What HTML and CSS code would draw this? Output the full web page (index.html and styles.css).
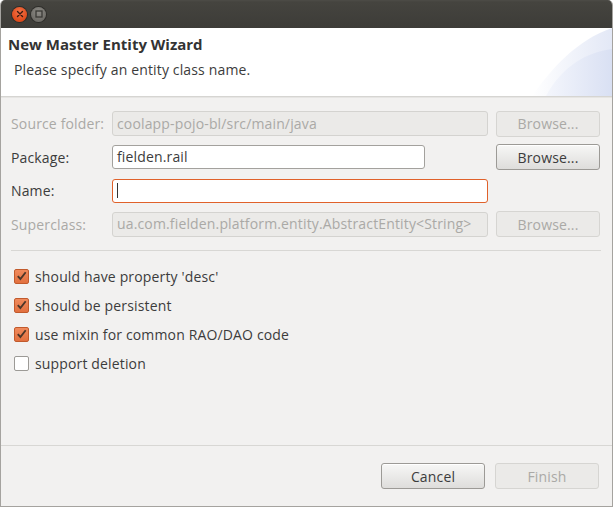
FILE: index.html
```html
<!DOCTYPE html>
<html>
<head>
<meta charset="utf-8">
<link rel="stylesheet" href="styles.css">
</head>
<body>
<div class="window">
  <div class="titlebar">
    <span class="wbtn close"><svg width="14" height="14" viewBox="0 0 14 14"><path d="M4.5 4.5l5 5M9.5 4.5l-5 5" stroke="#3a1a10" stroke-width="1.4" stroke-linecap="round"/></svg></span>
    <span class="wbtn max"><svg width="14" height="14" viewBox="0 0 14 14"><rect x="4" y="4" width="6" height="6" fill="none" stroke="#3b3a36" stroke-width="1.3"/></svg></span>
  </div>
  <div class="header">
    <div class="header-text">
      <div class="h-title">New Master Entity Wizard</div>
      <div class="h-sub">Please specify an entity class name.</div>
    </div>
    <svg class="decor" width="80" height="68" viewBox="0 0 80 68">
      <defs>
        <linearGradient id="g1" x1="0" y1="0" x2="1" y2="0">
          <stop offset="0" stop-color="#ffffff"/>
          <stop offset="1" stop-color="#e3e8f6"/>
        </linearGradient>
        <linearGradient id="g2" x1="0" y1="0" x2="1" y2="0">
          <stop offset="0" stop-color="#f4f6fc"/>
          <stop offset="1" stop-color="#d9e0f3"/>
        </linearGradient>
      </defs>
      <path d="M0 68 C20 40 45 12 80 0 L80 68 Z" fill="url(#g1)"/>
      <path d="M14 68 C30 38 55 24 80 21 L80 68 Z" fill="url(#g2)"/>
    </svg>
  </div>
  <div class="content">
    <div class="form">
      <label class="lbl disabled">Source folder:</label>
      <div class="field disabled">coolapp-pojo-bl/src/main/java</div>
      <button class="btn disabled">Browse...</button>

      <label class="lbl">Package:</label>
      <div class="cell"><div class="field short">fielden.rail</div></div>
      <button class="btn">Browse...</button>

      <label class="lbl">Name:</label>
      <div class="field focus"><span class="caret"></span></div>
      <div></div>

      <label class="lbl disabled">Superclass:</label>
      <div class="field disabled">ua.com.fielden.platform.entity.AbstractEntity&lt;String&gt;</div>
      <button class="btn disabled">Browse...</button>
    </div>
    <div class="sep"></div>
    <div class="checks">
      <div class="check"><span class="box on"><svg width="14" height="14" viewBox="0 0 14 14"><path d="M3 7.2l2.8 3L11.5 3" fill="none" stroke="#4b3629" stroke-width="2"/></svg></span>should have property 'desc'</div>
      <div class="check"><span class="box on"><svg width="14" height="14" viewBox="0 0 14 14"><path d="M3 7.2l2.8 3L11.5 3" fill="none" stroke="#4b3629" stroke-width="2"/></svg></span>should be persistent</div>
      <div class="check"><span class="box on"><svg width="14" height="14" viewBox="0 0 14 14"><path d="M3 7.2l2.8 3L11.5 3" fill="none" stroke="#4b3629" stroke-width="2"/></svg></span>use mixin for common RAO/DAO code</div>
      <div class="check"><span class="box"></span>support deletion</div>
    </div>
  </div>
  <div class="footer">
    <button class="btn wide">Cancel</button>
    <button class="btn wide disabled">Finish</button>
  </div>
</div>
</body>
</html>
```
FILE: styles.css
```css
html, body {
  margin: 0;
  padding: 0;
  background: #ffffff;
}
body {
  font-family: "Open Sans", "DejaVu Sans", sans-serif;
  font-size: 14px;
  letter-spacing: 0.15px;
  color: #3c3c3c;
}
.window {
  width: 613px;
  height: 507px;
  box-sizing: border-box;
  display: flex;
  flex-direction: column;
  background: #f2f1f0;
  border-left: 1px solid #a5a39f;
  border-right: 1px solid #a5a39f;
  border-bottom: 1px solid #a5a39f;
  border-radius: 5px 5px 0 0;
  overflow: hidden;
}
.titlebar {
  height: 28px;
  flex: none;
  background: linear-gradient(#4d4c47 0, #45443f 2px, #3d3c38 100%);
  display: flex;
  align-items: center;
  gap: 4px;
  padding-left: 12px;
  margin: 0 -1px;
}
.wbtn {
  width: 15px;
  height: 15px;
  border-radius: 50%;
  display: flex;
  align-items: center;
  justify-content: center;
}
.wbtn svg { display: block; }
.close {
  background: radial-gradient(circle at 50% 35%, #f4744a, #df4a1a 70%);
  box-shadow: 0 0 0 1px #2e2d2a;
}
.max {
  background: radial-gradient(circle at 50% 35%, #8e8c87, #6e6c67 70%);
  box-shadow: 0 0 0 1px #2e2d2a;
}
.header {
  height: 68px;
  flex: none;
  background: #ffffff;
  border-bottom: 1px solid #d6d5d2;
  box-shadow: 0 1px 0 #e6e5e3;
  display: flex;
  justify-content: space-between;
}
.header-text {
  padding: 7px 0 0 7px;
}
.h-title {
  font-weight: bold;
  font-size: 15px;
  letter-spacing: 0;
  line-height: 19px;
  color: #333333;
}
.h-sub {
  margin: 6px 0 0 6px;
  line-height: 19px;
  color: #3c3c3c;
}
.decor { display: block; flex: none; }
.content {
  flex: 1;
  padding: 13px 0 0 10px;
}
.form {
  display: grid;
  grid-template-columns: 93px 376px 104px;
  grid-template-rows: repeat(4, 27px);
  column-gap: 8px;
  row-gap: 6.5px;
  align-items: center;
}
.lbl {
  color: #3c3c3c;
  white-space: nowrap;
}
.lbl.disabled { color: #aaa9a6; }
.field {
  height: 24px;
  box-sizing: border-box;
  border: 1px solid #a3a19d;
  border-radius: 3px;
  background: #ffffff;
  padding: 0 4px;
  line-height: 22px;
  color: #3c3c3c;
  white-space: nowrap;
  overflow: hidden;
  display: flex;
  align-items: center;
}
.field.short { width: 313px; }
.field.disabled {
  height: 25px;
  background: #ebeae8;
  border-color: #d4d3d0;
  color: #aaa9a6;
}
.field.focus {
  border-color: #e0612a;
}
.caret {
  display: block;
  width: 1px;
  height: 15px;
  background: #333;
}
.btn {
  font-family: inherit;
  font-size: 14px;
  letter-spacing: 0.15px;
  color: #3c3c3c;
  width: 104px;
  height: 26px;
  box-sizing: border-box;
  border: 1px solid #9c9a96;
  border-radius: 3px;
  background: linear-gradient(#f7f7f6, #dedddb);
  box-shadow: inset 0 1px 0 #ffffff;
  padding: 0;
}
.btn.disabled {
  color: #aaa9a6;
  border-color: #d6d5d2;
  background: #ebeae8;
  box-shadow: none;
}
.sep {
  height: 1px;
  background: #d8d7d4;
  margin: 12px 11px 0 0;
}
.checks {
  margin-top: 11px;
  display: flex;
  flex-direction: column;
}
.check {
  height: 29px;
  display: flex;
  align-items: center;
  gap: 6px;
  padding-left: 3px;
}
.box {
  width: 15px;
  height: 15px;
  box-sizing: border-box;
  border: 1px solid #9c9a96;
  border-radius: 2px;
  background: #ffffff;
  display: flex;
  align-items: center;
  justify-content: center;
}
.box svg { display: block; }
.box.on {
  border-color: #c15a2c;
  background: linear-gradient(#f08a5c, #e2703f);
}
.footer {
  flex: none;
  height: 61px;
  border-top: 1px solid #d8d7d4;
  display: flex;
  justify-content: flex-end;
  align-items: flex-start;
  gap: 10px;
  padding: 17px 13px 0 0;
  box-sizing: border-box;
}
```
